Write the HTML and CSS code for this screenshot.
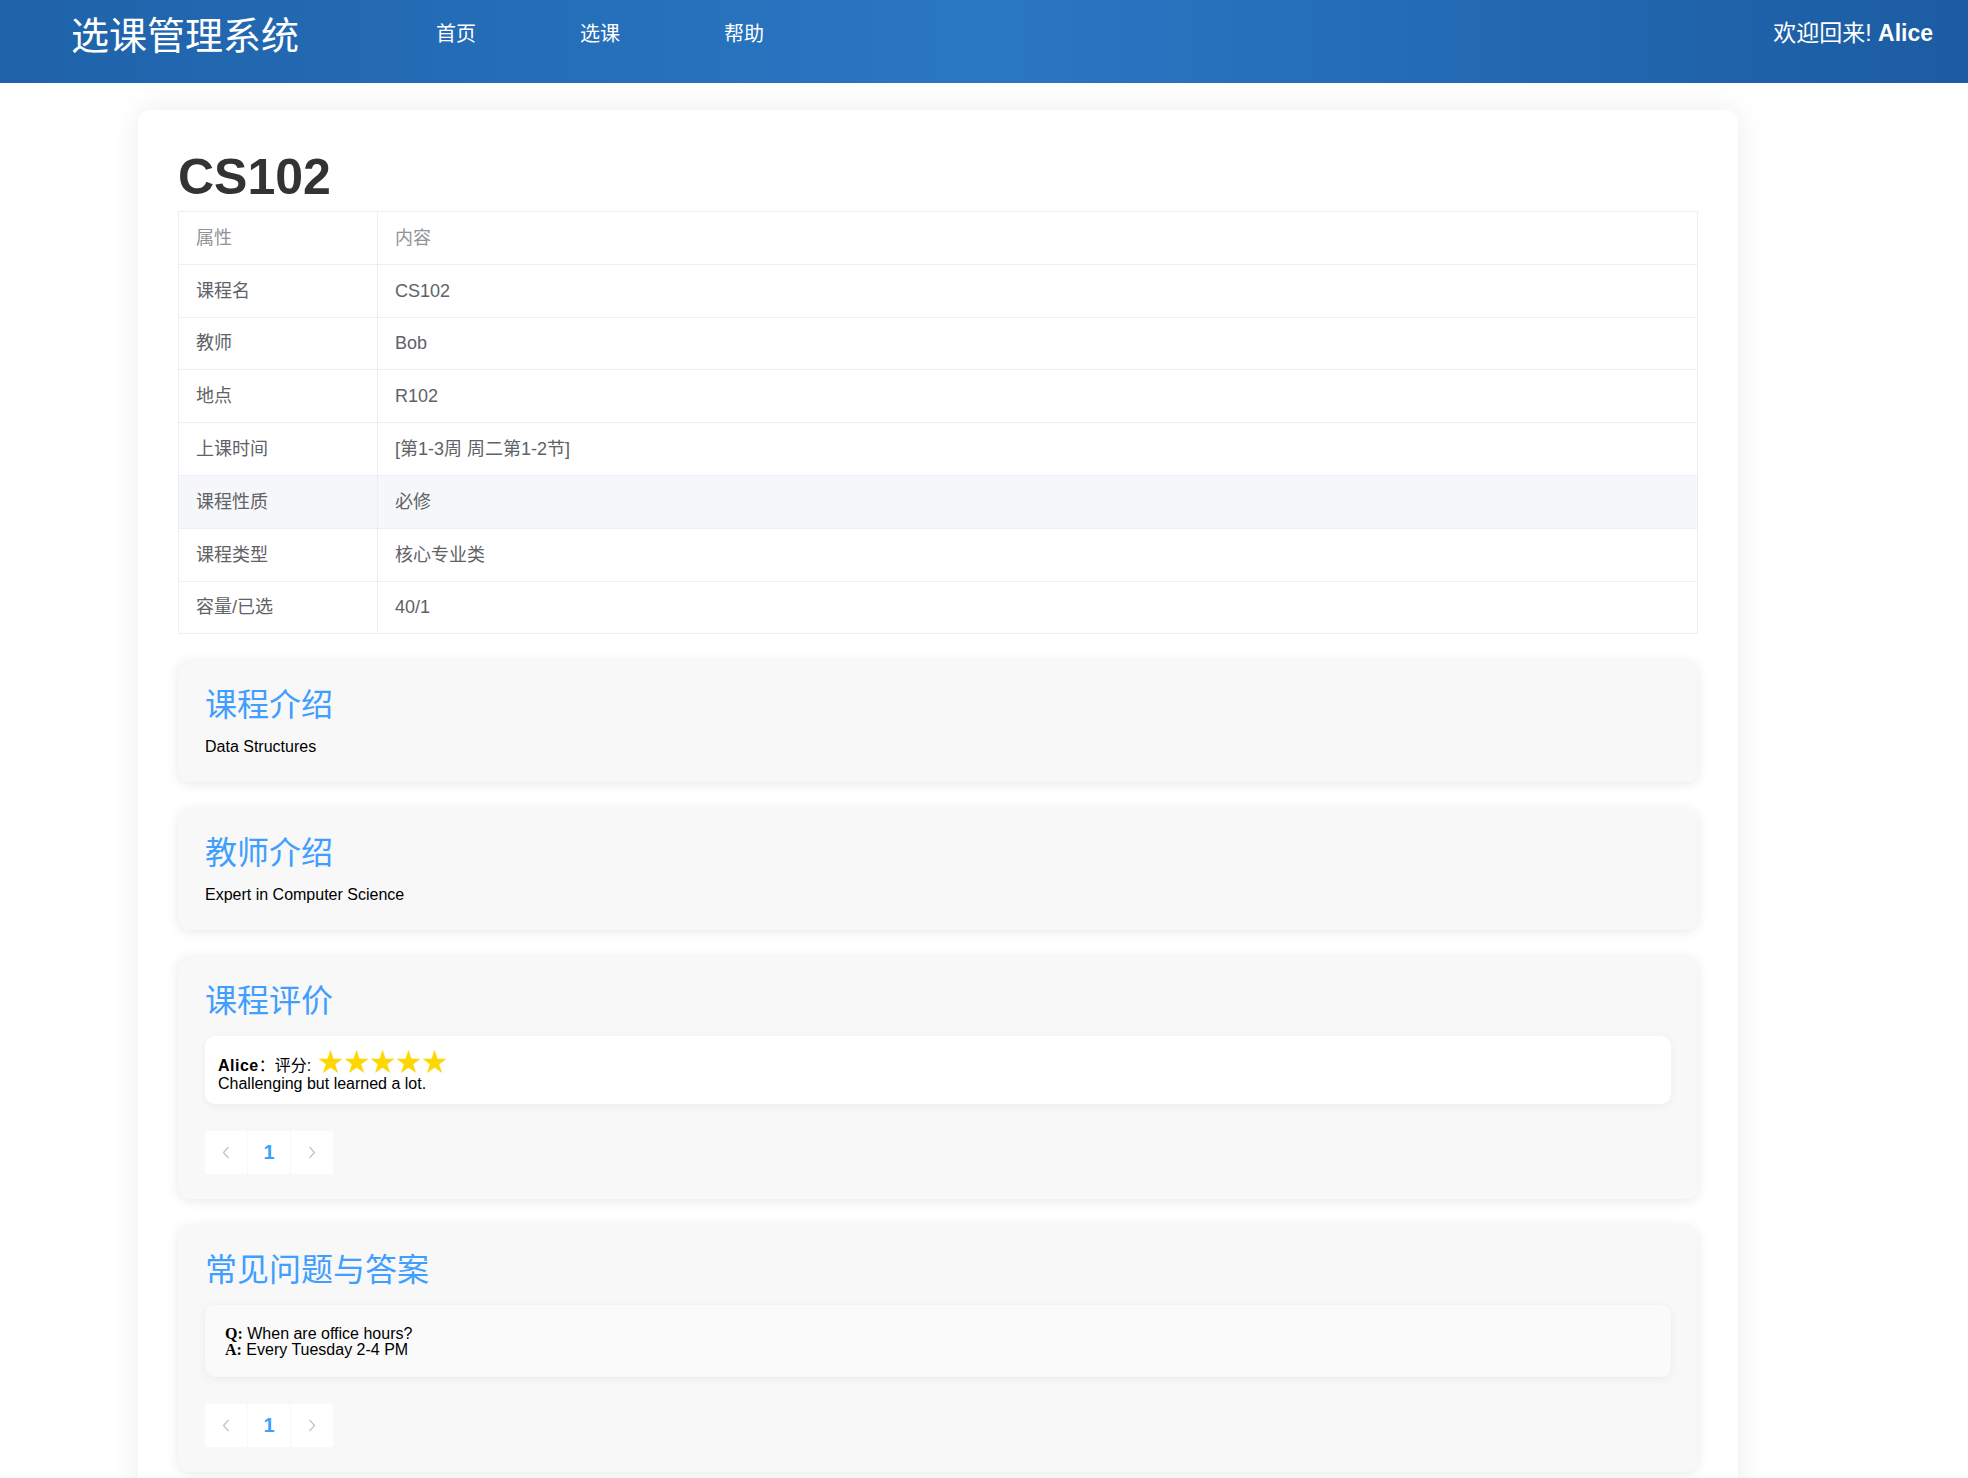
FILE: index.html
```html
<!DOCTYPE html>
<html lang="zh-CN">
<head>
<meta charset="utf-8">
<title>CS102 - 选课管理系统</title>
<link rel="stylesheet" href="styles.css">
</head>
<body>
<header class="topbar">
  <div class="brand">选课管理系统</div>
  <nav class="nav">
    <a class="nav-link" href="#">首页</a>
    <a class="nav-link" href="#">选课</a>
    <a class="nav-link" href="#">帮助</a>
  </nav>
  <div class="welcome">欢迎回来! <strong class="welcome-name">Alice</strong></div>
</header>

<main class="page">
  <section class="course-card">
    <h1 class="course-title">CS102</h1>

    <table class="info-table">
      <thead>
        <tr><th class="col-key">属性</th><th>内容</th></tr>
      </thead>
      <tbody>
        <tr><td class="col-key">课程名</td><td>CS102</td></tr>
        <tr><td class="col-key">教师</td><td>Bob</td></tr>
        <tr><td class="col-key">地点</td><td>R102</td></tr>
        <tr><td class="col-key">上课时间</td><td>[第1-3周 周二第1-2节]</td></tr>
        <tr class="is-hover"><td class="col-key">课程性质</td><td>必修</td></tr>
        <tr><td class="col-key">课程类型</td><td>核心专业类</td></tr>
        <tr><td class="col-key">容量/已选</td><td>40/1</td></tr>
      </tbody>
    </table>

    <div class="panel">
      <h3 class="panel-title">课程介绍</h3>
      <p class="panel-text">Data Structures</p>
    </div>

    <div class="panel">
      <h3 class="panel-title">教师介绍</h3>
      <p class="panel-text">Expert in Computer Science</p>
    </div>

    <div class="panel">
      <h3 class="panel-title">课程评价</h3>
      <div class="panel-list">
        <div class="review">
          <div class="review-head"><strong class="review-author">Alice</strong>：评分: <span class="stars">★★★★★</span></div>
          <div class="review-text">Challenging but learned a lot.</div>
        </div>
      </div>
      <div class="pager">
        <span class="pager-btn"><svg class="chev" width="8" height="13" viewBox="0 0 8 13"><polyline points="6.5,1 1.5,6.5 6.5,12"/></svg></span>
        <span class="pager-btn pager-num">1</span>
        <span class="pager-btn"><svg class="chev" width="8" height="13" viewBox="0 0 8 13"><polyline points="1.5,1 6.5,6.5 1.5,12"/></svg></span>
      </div>
    </div>

    <div class="panel">
      <h3 class="panel-title">常见问题与答案</h3>
      <div class="panel-list">
        <div class="faq-item">
          <div class="faq-line"><strong class="faq-label">Q:</strong> When are office hours?</div>
          <div class="faq-line"><strong class="faq-label">A:</strong> Every Tuesday 2-4 PM</div>
        </div>
      </div>
      <div class="pager">
        <span class="pager-btn"><svg class="chev" width="8" height="13" viewBox="0 0 8 13"><polyline points="6.5,1 1.5,6.5 6.5,12"/></svg></span>
        <span class="pager-btn pager-num">1</span>
        <span class="pager-btn"><svg class="chev" width="8" height="13" viewBox="0 0 8 13"><polyline points="1.5,1 6.5,6.5 1.5,12"/></svg></span>
      </div>
    </div>
  </section>
</main>
</body>
</html>
```

FILE: styles.css
```css
* {
  box-sizing: border-box;
}

body {
  margin: 0;
  background: #ffffff;
  font-family: "Liberation Sans", "Noto Sans CJK SC", sans-serif;
  color: #000;
}

/* ---------- header ---------- */
.topbar {
  display: flex;
  align-items: center;
  height: 83px;
  padding: 0 35px 17px 71px;
  background: linear-gradient(90deg, #1f62a9 0%, #2a77c4 50%, #1c5ca2 100%);
  color: #fff;
}

.brand {
  font-family: "Noto Sans CJK SC", sans-serif;
  font-size: 38px;
  line-height: 38px;
  white-space: nowrap;
}

.nav {
  display: flex;
  gap: 104px;
  margin-left: 137px;
}

.nav-link {
  font-family: "Noto Sans CJK SC", sans-serif;
  font-size: 20px;
  line-height: 20px;
  color: #fff;
  text-decoration: none;
}

.welcome {
  margin-left: auto;
  font-size: 23px;
  line-height: 23px;
  white-space: nowrap;
}

.welcome-name {
  font-weight: bold;
}

/* ---------- main card ---------- */
.page {
  padding: 27px 0 40px 138px;
}

.course-card {
  width: 1600px;
  background: #fff;
  border-radius: 12px;
  box-shadow: 0 0 30px rgba(0, 0, 0, 0.08);
  padding: 37px 40px 40px;
}

.course-title {
  margin: 0 0 4px;
  font-size: 50px;
  line-height: 60px;
  font-weight: bold;
  color: #333;
}

/* ---------- table ---------- */
.info-table {
  width: 100%;
  border-collapse: collapse;
  border: 1px solid #ebeef5;
  font-size: 18px;
}

.info-table th,
.info-table td {
  height: 52.8px;
  padding: 0 17px;
  border: 1px solid #ebeef5;
  text-align: left;
  vertical-align: middle;
  font-weight: normal;
  line-height: 24px;
  color: #606266;
}

.info-table th {
  color: #909399;
}

.info-table .col-key {
  width: 199px;
}

.info-table .is-hover td {
  background: #f5f7fa;
}

/* ---------- panels ---------- */
.panel {
  margin-top: 26px;
  background: #f8f8f8;
  border-radius: 12px;
  box-shadow: 0 2px 12px rgba(0, 0, 0, 0.09);
  padding: 22px 27px 25px;
}

.panel-title {
  margin: 0;
  font-family: "Noto Sans CJK SC", sans-serif;
  font-size: 32px;
  line-height: 40px;
  font-weight: normal;
  color: #409eff;
}

.panel-text {
  margin: 15px 0 0;
  font-size: 16px;
  line-height: 20px;
  color: #000;
}

.panel-list {
  margin-top: 18px;
}

/* review */
.review {
  background: #fff;
  border-radius: 10px;
  box-shadow: 0 2px 8px rgba(0, 0, 0, 0.05);
  padding: 21px 13px 11px;
  font-size: 16px;
  line-height: 18px;
  color: #000;
}

.review-author {
  font-weight: bold;
  letter-spacing: 0.5px;
}

.stars {
  margin-left: 2px;
  font-family: "Noto Sans CJK SC", sans-serif;
  font-size: 26px;
  line-height: 0;
  color: #ffd700;
}

/* faq */
.faq-item {
  background: #fafafa;
  border-radius: 10px;
  box-shadow: 0 2px 10px rgba(0, 0, 0, 0.06);
  padding: 21px 20px 19px;
  font-size: 16px;
  line-height: 16px;
  color: #000;
}

.faq-label {
  font-family: "Liberation Serif", serif;
  font-weight: bold;
}

/* pager */
.pager {
  display: flex;
  gap: 1px;
  margin-top: 27px;
}

.pager-btn {
  display: flex;
  align-items: center;
  justify-content: center;
  width: 42px;
  height: 43px;
  background: #fff;
  border-radius: 2px;
}

.pager-num {
  color: #409eff;
  font-size: 20px;
  font-weight: bold;
}

.chev polyline {
  fill: none;
  stroke: #c0c4cc;
  stroke-width: 1.3;
}
```
